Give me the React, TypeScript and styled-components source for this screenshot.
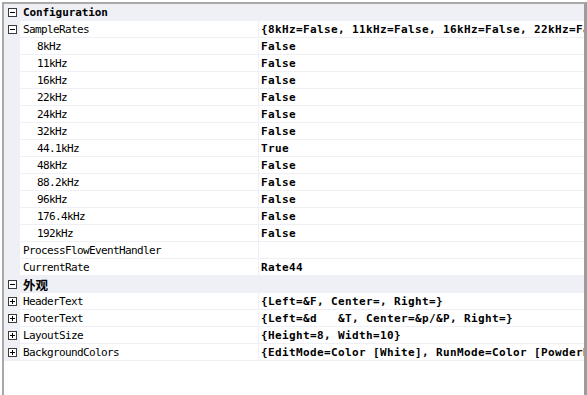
import React from 'react'
import styled, { createGlobalStyle } from 'styled-components'

const GlobalStyle = createGlobalStyle`
    html, body {
        margin: 0;
        padding: 0;
        background: #ffffff;
    }
`

const LINE = '#eef0f6'

const Frame = styled.div`
    margin: 2px 0 0 2px;
    width: 580px;
    height: 391px;
    border-top: 2px solid #a8a8a8;
    border-left: 2px solid #a8a8a8;
    border-right: 3px solid #9c9c9c;
    background: #ffffff;
    display: flex;
    flex-direction: column;
    overflow: hidden;
`

const Row = styled.div<{ $category?: boolean }>`
    display: flex;
    height: 16px;
    border-bottom: 1px solid ${LINE};
    background: ${({ $category }) => ($category ? LINE : '#ffffff')};
    flex-shrink: 0;
`

const Margin = styled.div`
    width: 16px;
    flex-shrink: 0;
    background: ${LINE};
    display: flex;
    align-items: center;
    padding-left: 4px;
    box-sizing: border-box;
`

const NameCell = styled.div<{ $indent: number; $category?: boolean }>`
    width: 239px;
    flex-shrink: 0;
    box-sizing: border-box;
    padding-left: ${({ $indent }) => $indent}px;
    border-right: 1px solid ${LINE};
    display: flex;
    align-items: center;
    white-space: pre;
    overflow: hidden;
    color: #000000;
    font-family: "DejaVu Sans Mono", monospace;
    font-size: 11px;
    font-weight: ${({ $category }) => ($category ? 700 : 400)};
    letter-spacing: ${({ $category }) => ($category ? '-0.1px' : '-0.62px')};
`

const CjkTitle = styled.span`
    font-family: "Noto Sans CJK SC", sans-serif;
    font-size: 12.5px;
    font-weight: 700;
    letter-spacing: 0;
    line-height: 13px;
`

const ValueCell = styled.div`
    flex: 1;
    min-width: 0;
    padding-left: 2px;
    display: flex;
    align-items: center;
    white-space: pre;
    overflow: hidden;
    color: #000000;
    font-family: "DejaVu Sans Mono", monospace;
    font-size: 11px;
    font-weight: 700;
    letter-spacing: 0.38px;
`

function ExpandBox({ open }: { open: boolean }) {
    return (
        <svg width="9" height="9" viewBox="0 0 9 9" shapeRendering="crispEdges">
            <rect x="0.5" y="0.5" width="8" height="8" fill="#ffffff" stroke="#3a3a3a" />
            <line x1="2" y1="4.5" x2="7" y2="4.5" stroke="#000000" />
            {!open && <line x1="4.5" y1="2" x2="4.5" y2="7" stroke="#000000" />}
        </svg>
    )
}

type Item = {
    name: string
    value?: string
    category?: boolean
    cjk?: boolean
    level?: number
    box?: 'open' | 'closed'
}

const rates = ['8kHz', '11kHz', '16kHz', '22kHz', '24kHz', '32kHz', '44.1kHz', '48kHz', '88.2kHz', '96kHz', '176.4kHz', '192kHz']

const items: Item[] = [
    { name: 'Configuration', category: true, box: 'open' },
    {
        name: 'SampleRates',
        box: 'open',
        value: '{8kHz=False, 11kHz=False, 16kHz=False, 22kHz=False, 24kHz=False, 32kHz=False}',
    },
    ...rates.map((r) => ({ name: r, level: 1, value: r === '44.1kHz' ? 'True' : 'False' })),
    { name: 'ProcessFlowEventHandler', value: '' },
    { name: 'CurrentRate', value: 'Rate44' },
    { name: '外观', category: true, cjk: true, box: 'open' },
    { name: 'HeaderText', box: 'closed', value: '{Left=&F, Center=, Right=}' },
    { name: 'FooterText', box: 'closed', value: '{Left=&d   &T, Center=&p/&P, Right=}' },
    { name: 'LayoutSize', box: 'closed', value: '{Height=8, Width=10}' },
    { name: 'BackgroundColors', box: 'closed', value: '{EditMode=Color [White], RunMode=Color [PowderBlue]}' },
]

export default function App() {
    return (
        <>
            <GlobalStyle />
            <Frame>
                {items.map((it, i) => (
                    <Row key={i} $category={it.category}>
                        <Margin>{it.box && <ExpandBox open={it.box === 'open'} />}</Margin>
                        <NameCell $indent={it.level ? 17 : 3} $category={it.category}>
                            {it.cjk ? <CjkTitle>{it.name}</CjkTitle> : it.name}
                        </NameCell>
                        <ValueCell>{it.value}</ValueCell>
                    </Row>
                ))}
            </Frame>
        </>
    )
}
